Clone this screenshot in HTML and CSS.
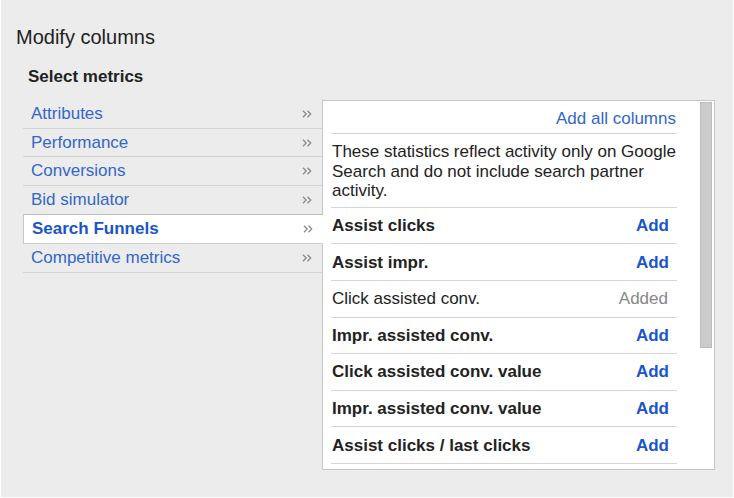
FILE: index.html
```html
<!DOCTYPE html>
<html>
<head>
<meta charset="utf-8">
<title>Modify columns</title>
<link rel="stylesheet" href="styles.css">
</head>
<body>
<div class="dialog">
  <h1 class="title">Modify columns</h1>
  <h2 class="subtitle">Select metrics</h2>
  <div class="picker">
    <ul class="cats">
      <li class="cat"><span class="cat-name">Attributes</span><svg class="chev" width="10" height="8" viewBox="0 0 10 8"><path d="M1 .7L4.2 4L1 7.3M5.5 .7L8.7 4L5.5 7.3"/></svg></li>
      <li class="cat"><span class="cat-name">Performance</span><svg class="chev" width="10" height="8" viewBox="0 0 10 8"><path d="M1 .7L4.2 4L1 7.3M5.5 .7L8.7 4L5.5 7.3"/></svg></li>
      <li class="cat"><span class="cat-name">Conversions</span><svg class="chev" width="10" height="8" viewBox="0 0 10 8"><path d="M1 .7L4.2 4L1 7.3M5.5 .7L8.7 4L5.5 7.3"/></svg></li>
      <li class="cat"><span class="cat-name">Bid simulator</span><svg class="chev" width="10" height="8" viewBox="0 0 10 8"><path d="M1 .7L4.2 4L1 7.3M5.5 .7L8.7 4L5.5 7.3"/></svg></li>
      <li class="cat cat-active"><span class="cat-name">Search Funnels</span><svg class="chev" width="10" height="8" viewBox="0 0 10 8"><path d="M1 .7L4.2 4L1 7.3M5.5 .7L8.7 4L5.5 7.3"/></svg></li>
      <li class="cat cat-after"><span class="cat-name">Competitive metrics</span><svg class="chev" width="10" height="8" viewBox="0 0 10 8"><path d="M1 .7L4.2 4L1 7.3M5.5 .7L8.7 4L5.5 7.3"/></svg></li>
    </ul>
    <div class="panel">
      <div class="panel-body">
        <div class="add-all"><span class="link">Add all columns</span></div>
        <p class="note">These statistics reflect activity only on Google Search and do not include search partner activity.</p>
        <div class="metric"><span class="metric-name">Assist clicks</span><span class="add">Add</span></div>
        <div class="metric"><span class="metric-name">Assist impr.</span><span class="add">Add</span></div>
        <div class="metric"><span class="metric-name plain">Click assisted conv.</span><span class="added">Added</span></div>
        <div class="metric"><span class="metric-name">Impr. assisted conv.</span><span class="add">Add</span></div>
        <div class="metric"><span class="metric-name">Click assisted conv. value</span><span class="add">Add</span></div>
        <div class="metric"><span class="metric-name">Impr. assisted conv. value</span><span class="add">Add</span></div>
        <div class="metric"><span class="metric-name">Assist clicks / last clicks</span><span class="add">Add</span></div>
      </div>
      <div class="scrollbar"><div class="thumb"></div></div>
    </div>
  </div>
</div>
</body>
</html>
```
FILE: styles.css
```css
html {
  background: #ffffff;
}
body {
  margin: 0 1px 1px 1px;
  height: 497px;
  box-sizing: border-box;
  background: #ececec;
  font-family: "Liberation Sans", Arial, sans-serif;
  color: #222222;
  overflow: hidden;
}
.dialog {
  padding: 26px 0 0 15px;
}
.title {
  margin: 0;
  font-size: 20px;
  font-weight: normal;
  line-height: 23px;
  color: #222222;
}
.subtitle {
  margin: 18px 0 0 12px;
  font-size: 17px;
  font-weight: bold;
  line-height: 20px;
  color: #222222;
}
.picker {
  display: flex;
  align-items: flex-start;
  margin: 13px 0 0 7px;
}
.cats {
  list-style: none;
  margin: 0;
  padding: 0;
  width: 299px;
  flex: none;
}
.cat {
  height: 28.7px;
  box-sizing: border-box;
  border-bottom: 1px solid #d2d2d2;
  display: flex;
  align-items: center;
  justify-content: space-between;
  padding: 0 10px 0 8px;
  font-size: 17px;
  color: #3366cc;
}
.cat-active {
  position: relative;
  z-index: 1;
  background: #ffffff;
  border-top: 1px solid #bdbdbd;
  border-left: 1px solid #c8c8c8;
  border-bottom: 1px solid #cfcfcf;
  margin-top: -1px;
  height: 30.2px;
  margin-right: -1px;
  padding-left: 8px;
  padding-right: 10px;
  font-weight: bold;
  color: #1a55c8;
}
.cat-after {
  height: 29.5px;
}
.chev {
  flex: none;
  fill: none;
  stroke: #8a8a8a;
  stroke-width: 1.3;
}
.panel {
  width: 393px;
  height: 370px;
  box-sizing: border-box;
  flex: none;
  background: #ffffff;
  border: 1px solid #c6c6c6;
  display: flex;
  overflow: hidden;
}
.panel-body {
  width: 346px;
  margin-left: 8px;
  flex: none;
}
.add-all {
  display: flex;
  justify-content: flex-end;
  padding: 8px 1px 4px 0;
  line-height: 20px;
  border-bottom: 1px solid #d4d4d4;
}
.link {
  font-size: 17px;
  color: #3366cc;
}
.note {
  margin: 0;
  padding: 8px 0 6px 1px;
  font-size: 17px;
  line-height: 19.6px;
  color: #222222;
  border-bottom: 1px solid #d4d4d4;
}
.metric {
  height: 36.6px;
  box-sizing: border-box;
  display: flex;
  align-items: center;
  justify-content: space-between;
  padding: 1px 8px 0 1px;
  border-bottom: 1px solid #d4d4d4;
  font-size: 17px;
}
.metric-name {
  font-weight: bold;
  color: #222222;
}
.metric-name.plain {
  font-weight: normal;
}
.add {
  font-weight: bold;
  color: #1a55d0;
}
.added {
  color: #888888;
  margin-right: 1px;
}
.scrollbar {
  margin-left: 23px;
  width: 13px;
  flex: none;
  padding: 1px 1px 0 0;
  box-sizing: border-box;
}
.thumb {
  height: 246px;
  background: #cbcbcb;
  border: 1px solid #bcbcbc;
  box-sizing: border-box;
}
```
